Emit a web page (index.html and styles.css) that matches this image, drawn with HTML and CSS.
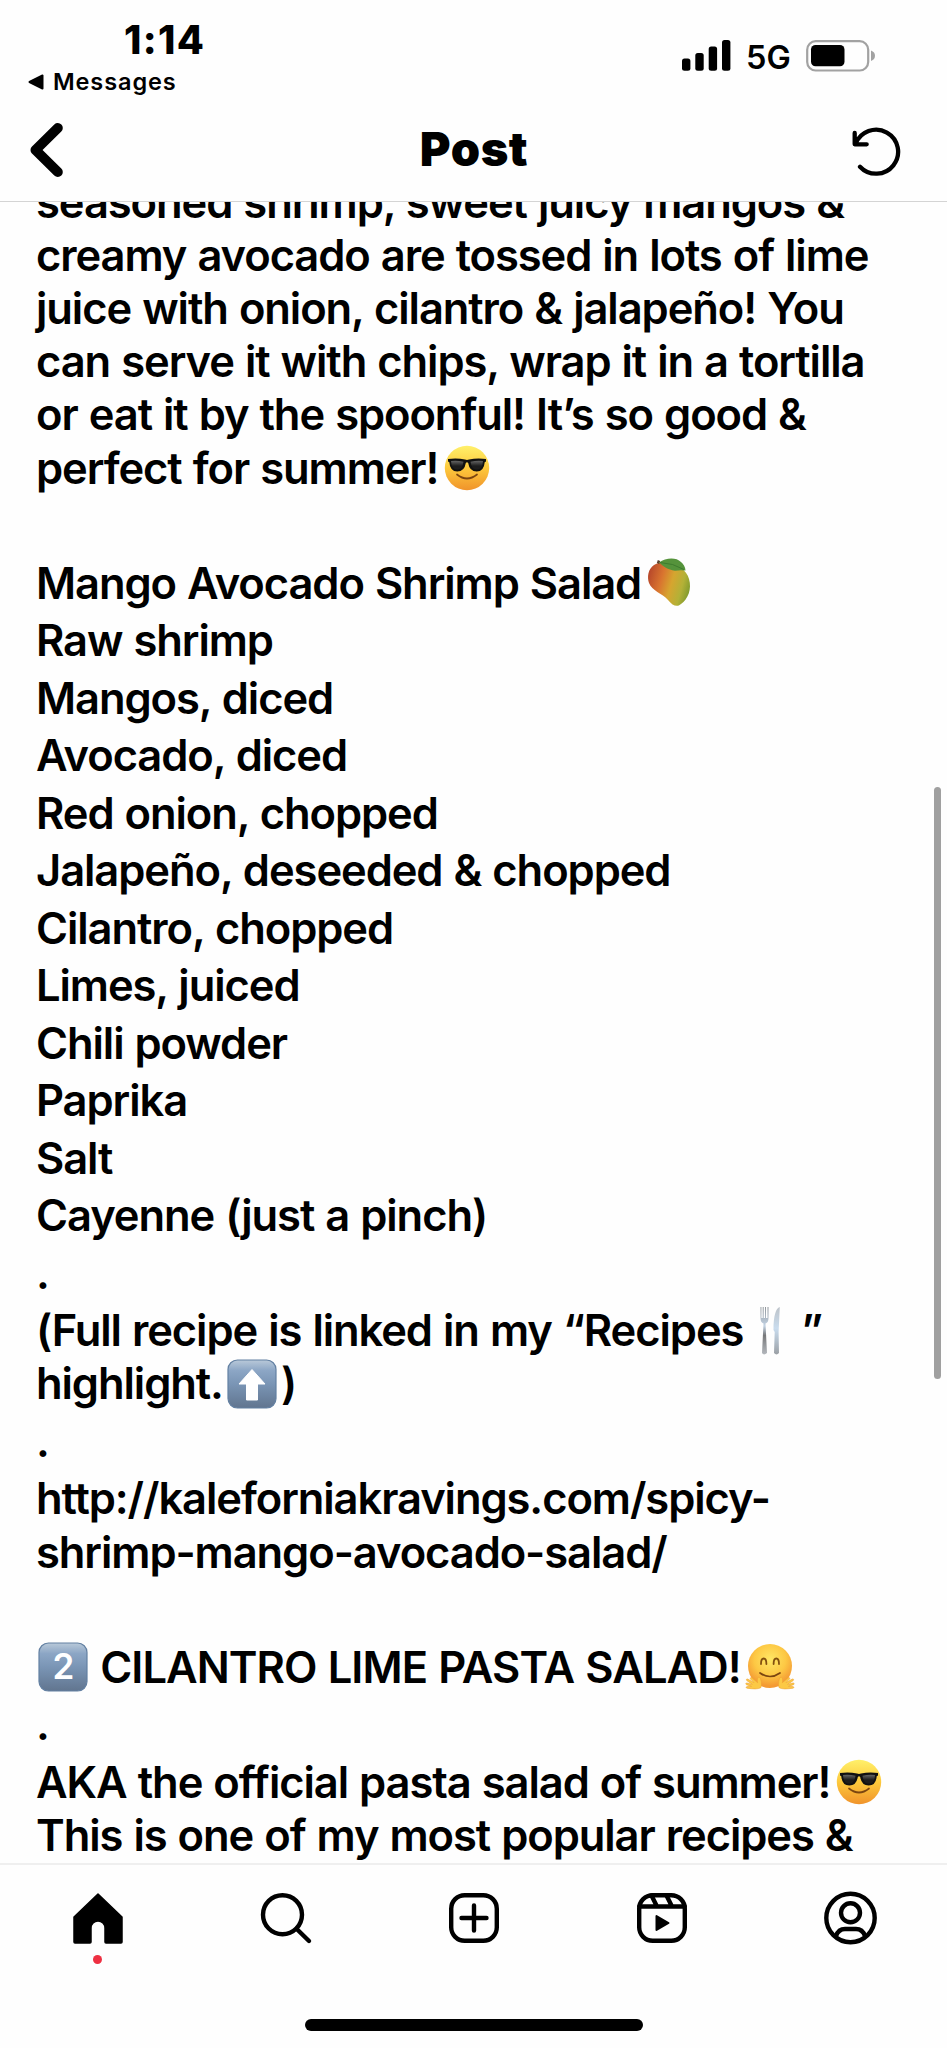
FILE: index.html
```html
<!DOCTYPE html>
<html lang="en">
  <head>
    <meta charset="UTF-8" />
    <title>Post</title>
    <link rel="stylesheet" href="styles.css">
  </head>
  <body>
    <!-- shared emoji drawings -->
    <svg class="defs" width="0" height="0">
      <defs>
        <linearGradient id="face" x1="0" y1="0" x2="0" y2="1">
          <stop offset="0" stop-color="#fff06a" />
          <stop offset="0.5" stop-color="#fdc93c" />
          <stop offset="1" stop-color="#f0932b" />
        </linearGradient>
        <radialGradient id="cheeks" cx="0.5" cy="0.35" r="0.6">
          <stop offset="0" stop-color="#ffe765" />
          <stop offset="0.6" stop-color="#fdc844" />
          <stop offset="1" stop-color="#f49a34" />
        </radialGradient>
        <linearGradient id="lens" x1="0" y1="0" x2="0" y2="1">
          <stop offset="0" stop-color="#666" />
          <stop offset="0.6" stop-color="#1c1c1c" />
        </linearGradient>
        <linearGradient id="key" x1="0" y1="0" x2="0" y2="1">
          <stop offset="0" stop-color="#b9c9d9" />
          <stop offset="0.22" stop-color="#8ca6c5" />
          <stop offset="0.5" stop-color="#7a95b5" />
          <stop offset="1" stop-color="#61758f" />
        </linearGradient>
        <linearGradient id="mango" x1="0" y1="0.35" x2="1" y2="0.65">
          <stop offset="0" stop-color="#b94a2b" />
          <stop offset="0.3" stop-color="#d9742f" />
          <stop offset="0.55" stop-color="#d6a52f" />
          <stop offset="0.8" stop-color="#b3b137" />
          <stop offset="1" stop-color="#7f9a2d" />
        </linearGradient>
        <linearGradient id="steel" x1="0" y1="0" x2="0" y2="1">
          <stop offset="0" stop-color="#8f959a" />
          <stop offset="0.4" stop-color="#c3d3e4" />
          <stop offset="0.6" stop-color="#77787a" />
          <stop offset="1" stop-color="#b4b8bd" />
        </linearGradient>
        <linearGradient id="blade" x1="0" y1="0" x2="0" y2="1">
          <stop offset="0" stop-color="#bdc3c9" />
          <stop offset="0.45" stop-color="#c9dcee" />
          <stop offset="1" stop-color="#9ba0a5" />
        </linearGradient>
        <symbol id="cool" viewBox="0 0 50 50">
          <circle cx="25" cy="25" r="22.2" fill="url(#face)" />
          <path d="M15 31.5q10 8 20 0" fill="none" stroke="#7b4510" stroke-width="1.7" stroke-linecap="round" />
          <path d="M6 16q9-1.500 17 .6 2 .6 4 0 8-2.100 17-.6v2.500l-1.300.8q-.7 9.200-8 9.200-7.200 0-8.500-8.500-1.200-1.600-2.400 0-1.300 8.500-8.500 8.500-7.300 0-8-9.200L6 18.500z" fill="#111" />
          <path d="M9 18q6-.9 12.500.8-1 7.700-6.300 7.700-5.800 0-6.200-8.500zM41 18q-6-.9-12.500.8 1 7.700 6.300 7.700 5.800 0 6.200-8.500z" fill="url(#lens)" />
        </symbol>
        <symbol id="hug" viewBox="0 0 50 50">
          <circle cx="25" cy="24" r="22" fill="url(#cheeks)" />
          <path d="M16 22q0-5.500 2.700-5.500t2.700 5.500M28.600 22q0-5.500 2.700-5.500t2.700 5.500" fill="none" stroke="#83500f" stroke-width="1.8" stroke-linecap="round" />
          <path d="M15 31q10 7 20 0" fill="none" stroke="#7b4510" stroke-width="1.7" stroke-linecap="round" />
          <g fill="#fcc945" stroke="#eea233" stroke-width="0.6">
            <path id="hand" d="M16 45.500c-3 2-8 1.500-14 .7-1.500-.5-1-1.700.5-1.700l4-.1-5-1.700c-1.400-.8-.5-2 .8-1.600l5 1.300-5.500-3.800c-1-1.100 0-2.100 1.200-1.400l6 3.400-3.500-3.500c-.7-1.200.6-2 1.600-1.100l5.500 4.700c-.4-3-.2-5.700 1.500-5.500 2 .3 2.800 7 1.900 10.300z" />
            <use href="#hand" transform="matrix(-1 0 0 1 50 0)" />
          </g>
        </symbol>
      </defs>
    </svg>

    <div class="screen">
      <div class="status-bar">
        <div class="status-left">
          <div class="time">1:14</div>
          <div class="back-app">
            <svg width="16" height="16" viewBox="0 0 16 16"><path d="M1.500 8L14.500 1.500v13z" stroke="#000" stroke-width="2" stroke-linejoin="round" /></svg>
            <span>Messages</span>
          </div>
        </div>
        <div class="status-right">
          <svg class="signal" width="49" height="31" viewBox="0 0 49 31">
            <rect x="0" y="18.5" width="8.4" height="12.3" rx="2.5" />
            <rect x="13.3" y="13" width="8.4" height="17.8" rx="2.5" />
            <rect x="26.7" y="6.5" width="8.4" height="24.3" rx="2.5" />
            <rect x="40" y="0" width="8.4" height="30.8" rx="2.5" />
          </svg>
          <span class="network">5G</span>
          <svg class="battery" width="70" height="32" viewBox="0 0 70 32">
            <rect x="1.2" y="1.2" width="61" height="29.3" rx="8.5" fill="none" stroke="#a2a2a2" stroke-width="2.2" />
            <rect x="5" y="5" width="33.5" height="21.3" rx="4.5" />
            <path d="M65 10.500q4 1.500 4 5.200t-4 5.200z" fill="#a2a2a2" />
          </svg>
        </div>
      </div>

      <div class="header">
        <svg class="back" width="34" height="56" viewBox="0 0 34 56"><path d="M27.800 6L5.500 28l22.300 22" fill="none" stroke="#000" stroke-width="10" stroke-linecap="round" stroke-linejoin="round" /></svg>
        <h1>Post</h1>
        <svg class="refresh" width="50" height="50" viewBox="0 0 50 50">
          <path d="M4.500 17A22 22 0 1 1 9 39.700M3.700 6v11.300h12" fill="none" stroke="#000" stroke-width="4.3" stroke-linecap="round" stroke-linejoin="round" />
        </svg>
      </div>

      <div class="content">
        <p>seasoned shrimp, sweet juicy mangos &amp;<br>creamy avocado are tossed in lots of lime<br>juice with onion, cilantro &amp; jalapeño! You<br>can serve it with chips, wrap it in a tortilla<br>or eat it by the spoonful! It’s so good &amp;<br>perfect for summer!<svg class="emoji"><use href="#cool" /></svg></p>
        <p>&nbsp;</p>
        <p>Mango Avocado Shrimp Salad<svg class="emoji" viewBox="0 0 50 50">
            <path d="M9 7C3 11 2 19 4 25c3 8 13 10 19 17 5 6 9 7.500 13 4 7-5 11-15 8-25C42 12 31 5 22 4 17 3.500 13 4.500 9 7z" fill="url(#mango)" />
            <path d="M13 5.500l1-3" stroke="#5a4030" stroke-width="2.5" />
            <path d="M14 4.500C21-.5 31-1 36 4q4 3 4.500 8.500-6-.5-10.500.2C23 12 18 8 14 4.500z" fill="#55933b" />
            <path d="M15 4.500q13 .5 24 7" fill="none" stroke="#38752b" stroke-width="0.8" />
          </svg></p>
        <p>Raw shrimp</p>
        <p>Mangos, diced</p>
        <p>Avocado, diced</p>
        <p>Red onion, chopped</p>
        <p>Jalapeño, deseeded &amp; chopped</p>
        <p>Cilantro, chopped</p>
        <p>Limes, juiced</p>
        <p>Chili powder</p>
        <p>Paprika</p>
        <p>Salt</p>
        <p>Cayenne (just a pinch)</p>
        <p>.</p>
        <p>(Full recipe is linked in my “Recipes<svg class="emoji cutlery" viewBox="0 0 50 50">
            <path d="M15.500 1v11q0 4.500 3 5.500L17 47q1.800 2.800 5 0l-1.500-29.500q3-1 3-5.500V1h-1v11h-1.500V1h-1v11h-1.300V1h-1v11h-1.300V1z" fill="url(#steel)" />
            <path d="M34.800 1c-4 1-6.300 9-6.300 23l1.200 2L29 47q2.500 2.800 5 0l-.4-21z" fill="url(#blade)" />
          </svg>”<br>highlight.<svg class="emoji" viewBox="0 0 50 50">
            <rect x="1" y="1" width="48" height="48" rx="9.5" fill="url(#key)" stroke="#6380a2" stroke-width="1.2" />
            <path d="M25 10.500L38 25h-7.500v16h-11V25H12z" fill="#fff" stroke="#fff" stroke-linejoin="round" />
          </svg>)</p>
        <p>.</p>
        <p>http://kaleforniakravings.com/spicy-<br>shrimp-mango-avocado-salad/</p>
        <p>&nbsp;</p>
        <p class="dish"><svg class="emoji first" viewBox="0 0 50 50">
            <rect x="1" y="1" width="48" height="48" rx="9.5" fill="url(#key)" stroke="#6380a2" stroke-width="1.2" />
            <text class="keycap" x="25" y="37" text-anchor="middle">2</text>
          </svg> CILANTRO LIME PASTA SALAD!<svg class="emoji"><use href="#hug" /></svg></p>
        <p>.</p>
        <p>AKA the official pasta salad of summer!<svg class="emoji"><use href="#cool" /></svg><br>This is one of my most popular recipes &amp;</p>
        <div class="scrollbar"></div>
      </div>

      <div class="tab-bar">
        <div class="tabs">
          <div class="tab">
            <svg viewBox="0 0 54 54"><path d="M27 3L51 26v25a1 1 0 0 1-1 1H35a1 1 0 0 1-1-1V37a7 7 0 0 0-14 0v14a1 1 0 0 1-1 1H4a1 1 0 0 1-1-1V26z" stroke="#000" stroke-width="1.5" stroke-linejoin="round" /></svg>
            <span class="dot"></span>
          </div>
          <div class="tab">
            <svg viewBox="0 0 54 54" class="line"><circle cx="23.5" cy="23.7" r="19.5" /><path d="M37.500 37.700L50 50" /></svg>
          </div>
          <div class="tab">
            <svg viewBox="0 0 54 54" class="line"><rect x="4.2" y="4.2" width="45.6" height="45.6" rx="13.5" /><path d="M27 14.500v25M14.500 27h25" /></svg>
          </div>
          <div class="tab">
            <svg viewBox="0 0 54 54" class="line"><rect x="4.2" y="4.2" width="45.6" height="45.6" rx="13.5" /><path d="M4.200 15.500h45.600M16.500 4.500l5.500 11M31.500 4.500l5.500 11" /><path d="M21.500 25v14l12-7z" fill="#000" stroke-width="2" /></svg>
          </div>
          <div class="tab">
            <svg viewBox="0 0 54 54" class="line"><circle cx="27.5" cy="27" r="24.2" /><circle cx="27.5" cy="21.8" r="9.5" /><path d="M13 45q2.500-7 9-7h11q6.500 0 9 7" /></svg>
          </div>
        </div>
        <div class="home-indicator"></div>
      </div>
    </div>
  </body>
</html>
```

FILE: styles.css
```css
* {
  box-sizing: border-box;
}
body {
  margin: 0;
  background: #fefefe;
  color: #000;
  font-family: Inter, "Liberation Sans", sans-serif;
}
svg {
  display: block;
}
.defs {
  position: absolute;
}
.screen {
  width: 947px;
  height: 2048px;
  display: flex;
  flex-direction: column;
  overflow: hidden;
}

/* status bar */
.status-bar {
  height: 100px;
  display: flex;
  justify-content: space-between;
  padding: 20px 71px 0 28px;
}
.time {
  padding-left: 96px;
  font-size: 39.5px;
  line-height: 40px;
  font-weight: 800;
  letter-spacing: 1.3px;
}
.back-app {
  display: flex;
  align-items: center;
  gap: 9px;
  margin-top: 8px;
  font-size: 23.5px;
  line-height: 28px;
  font-weight: 600;
  letter-spacing: 0.9px;
}
.status-right {
  display: flex;
  align-items: flex-start;
  padding-top: 20px;
}
.signal {
  margin-right: 15px;
}
.network {
  width: 60px;
  font-size: 32.5px;
  line-height: 35px;
  font-weight: 600;
}

/* header */
.header {
  flex: none;
  height: 102px;
  display: grid;
  grid-template-columns: 1fr auto 1fr;
  align-items: center;
  padding: 0 46px 2px 30px;
  border-bottom: 1px solid #d4d4d4;
}
.header h1 {
  margin: 0 0 2px 17px;
  font-size: 47px;
  font-weight: 900;
  letter-spacing: 0.6px;
}
.refresh {
  margin-top: 4px;
  justify-self: end;
}

/* post text */
.content {
  position: relative;
  height: 1661px;
  flex: none;
  overflow: hidden;
  padding-left: 36px;
  font-size: 43.5px;
  line-height: 53.2px;
  font-weight: 600;
  letter-spacing: -1.08px;
  word-spacing: 1.2px;
  white-space: nowrap;
}
.content p {
  margin: 0 0 4.3px;
}
.content p:first-child {
  margin-top: -26.4px;
}
.content .dish {
  letter-spacing: -0.95px;
}
.emoji {
  display: inline-block;
  width: 50px;
  height: 50px;
  margin: 0 4px 0 4px;
  vertical-align: -9.5px;
}
.emoji.first {
  margin: 0 1px 0 2px;
}
.emoji.cutlery {
  margin: 0 6px 0 2px;
}
.keycap {
  font-size: 35px;
  font-weight: 600;
  fill: #fff;
}
.scrollbar {
  position: absolute;
  right: 6.5px;
  top: 585px;
  width: 7px;
  height: 592px;
  border-radius: 4px;
  background: #a0a0a0;
}

/* bottom navigation */
.tab-bar {
  flex: 1;
  display: flex;
  flex-direction: column;
  align-items: center;
  justify-content: space-between;
  border-top: 2px solid #efefef;
  padding: 26px 3px 17px 4px;
}
.tabs {
  width: 100%;
  display: flex;
}
.tab {
  flex: 1;
  display: flex;
  flex-direction: column;
  align-items: center;
}
.tab svg {
  width: 54px;
  height: 54px;
}
.line {
  fill: none;
  stroke: #000;
  stroke-width: 4.4px;
  stroke-linecap: round;
  stroke-linejoin: round;
}
.dot {
  width: 9px;
  height: 9px;
  margin: 10px 1px 0 0;
  border-radius: 50%;
  background: #ee3042;
}
.home-indicator {
  width: 338px;
  height: 12px;
  border-radius: 6px;
  background: #000;
}
```
